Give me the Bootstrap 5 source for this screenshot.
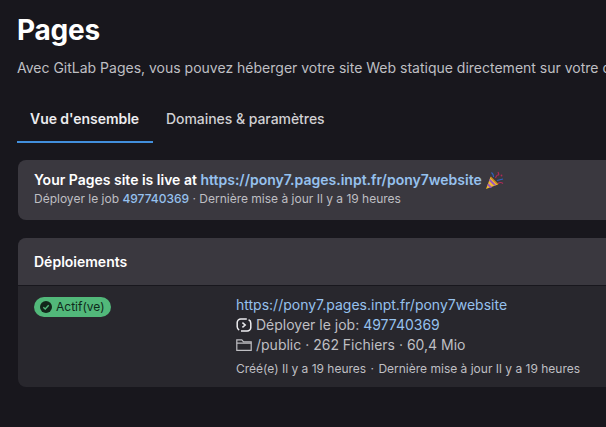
<!DOCTYPE html>
<html lang="fr">
<head>
    <meta charset="UTF-8">
    <meta name="viewport" content="width=device-width, initial-scale=1.0">
    <title>Pages</title>
    <link rel="stylesheet" href="https://cdn.jsdelivr.net/npm/bootstrap@5.3.0/dist/css/bootstrap.min.css">
    <style>
        html, body { height: 100%; overflow: hidden; }
        body { background: #18171d; color: #ececef; font-family: Inter, "Liberation Sans", sans-serif; font-size: 14px; }
        a { color: #96c1ee; text-decoration: none; }
        .page-wrap { width: 900px; padding: 12px 0 0 17px; }
        .page-title { font-size: 28px; line-height: 36px; font-weight: 700; color: #fff; margin: 0 0 10px; letter-spacing: -.25px; }
        .page-sub { font-size: 14px; line-height: 20px; color: #bfbfc3; margin: 0 0 19px; white-space: nowrap; }
        .tab-bar { gap: 0; margin-bottom: 17px; }
        .tab-item { padding: 0 13px; height: 46px; line-height: 44px; color: #d1d0d3; font-size: 14px; font-weight: 500; letter-spacing: -.05px; }
        .tab-item.is-on { color: #ececef; font-weight: 600; width: 136px; border-bottom: 2px solid #428fdc; }
        .live-box { background: #3a383f; border-radius: 8px; margin-left: 1px; height: 60px; padding: 10px 16px; margin-bottom: 18px; }
        .live-title { font-size: 14px; line-height: 20px; font-weight: 600; color: #fff; display: flex; align-items: center; gap: 3px; }
        .live-meta { font-size: 12px; line-height: 18px; color: #bfbfc3; margin-top: 0; }
        .live-meta a { font-weight: 500; }
        .deploy-card { background: #28272d; border: 0; border-radius: 8px; margin-left: 1px; height: 149px; overflow: hidden; }
        .deploy-head { background: #3a383f; height: 48px; line-height: 47px; padding: 0 16px; font-weight: 600; color: #fff; font-size: 14px; border-bottom: 1px solid #18171d; }
        .deploy-body { padding: 9px 16px; }
        .status-col { width: 202px; flex: none; padding-top: 2px; }
        .status-pill { background: #52b87a; color: #0f2a1a; border-radius: 10px; height: 20px; padding: 0 6px; font-size: 12px; line-height: 20px; gap: 4px; }
        .info-line { font-size: 14px; line-height: 20px; color: #bfbfc3; gap: 4px; }
        .info-small { font-size: 12px; line-height: 18px; color: #bfbfc3; margin-top: 5px; }
        .dot-sep { margin: 0 1px; }
    </style>
</head>
<body>
    <div class="page-wrap">
        <h1 class="page-title">Pages</h1>
        <p class="page-sub">Avec GitLab Pages, vous pouvez héberger votre site Web statique directement sur votre dépôt GitLab.</p>

        <div class="tab-bar d-flex">
            <div class="tab-item is-on">Vue d'ensemble</div>
            <div class="tab-item">Domaines &amp; paramètres</div>
        </div>

        <div class="live-box">
            <div class="live-title">
                <span>Your Pages site is live at <a href="#">https://pony7.pages.inpt.fr/pony7website</a></span>
                <!-- party popper -->
                <svg width="19" height="20" viewBox="0 0 19 20">
                    <path d="M1 19 L5.5 7 L13 14.5 Z" fill="#f0bb2e"/>
                    <path d="M3.2 13.2 L7.2 17.2 L5.2 17.9 L2.4 15.2 Z M4.9 8.8 L11 15 L9.2 15.8 L4.1 10.7 Z" fill="#9a55c4"/>
                    <path d="M5.5 7 L13 14.5" stroke="#c8861c" stroke-width="1.3"/>
                    <path d="M8.6 7 Q8.5 4 6.5 2.5" stroke="#2f63c4" stroke-width="1.1" fill="none"/>
                    <path d="M10.5 8 Q12 4.5 13 5 Q14.5 5.5 13 2" stroke="#b02a58" stroke-width="1.1" fill="none"/>
                    <path d="M12 10.5 L18 9" stroke="#2f63c4" stroke-width="1.1"/>
                    <path d="M13 13.5 Q15.5 11.5 18 13.5" stroke="#b02a58" stroke-width="1.1" fill="none"/>
                    <circle cx="16.5" cy="5.5" r=".9" fill="#b02a58"/>
                </svg>
            </div>
            <div class="live-meta">Déployer le job <a href="#">497740369</a> · Dernière mise à jour Il y a 19 heures</div>
        </div>

        <div class="card deploy-card">
            <div class="deploy-head">Déploiements</div>
            <div class="deploy-body d-flex">
                <div class="status-col">
                    <span class="status-pill d-inline-flex align-items-center">
                        <svg width="12" height="12" viewBox="0 0 12 12">
                            <circle cx="6" cy="6" r="6" fill="#12261a"/>
                            <path d="M3.3 6.2 L5.2 8 L8.7 4.3" stroke="#52b87a" stroke-width="1.4" fill="none"/>
                        </svg>
                        Actif(ve)
                    </span>
                </div>
                <div>
                    <div class="info-line"><a href="#">https://pony7.pages.inpt.fr/pony7website</a></div>
                    <div class="info-line d-flex align-items-center">
                        <svg width="16" height="16" viewBox="0 0 16 16" fill="none" stroke="#ececef" stroke-width="1.5">
                            <path d="M5 14 H11 A3.6 3.6 0 0 0 14.8 10.4 V6.2 A3.6 3.6 0 0 0 12.6 2.8"/>
                            <path d="M10.8 2 H4.8 A3.6 3.6 0 0 0 1.2 5.6 V9.8 A3.6 3.6 0 0 0 3.2 13"/>
                            <path d="M6.4 5.6 L9.2 8 L6.4 10.4"/>
                        </svg>
                        <span>Déployer le job: <a href="#">497740369</a></span>
                    </div>
                    <div class="info-line d-flex align-items-center">
                        <svg width="16" height="16" viewBox="0 0 16 16" fill="none" stroke="#bfbfc3" stroke-width="1.2">
                            <path d="M.8 13.4 V2.8 H5.8 L7.6 4.8 H15.2 V13.4 Z"/>
                            <path d="M.8 6.2 H15.2"/>
                        </svg>
                        <span>/public · 262 Fichiers · 60,4 Mio</span>
                    </div>
                    <div class="info-small">Créé(e) Il y a 19 heures <span class="dot-sep">·</span> Dernière mise à jour Il y a 19 heures</div>
                </div>
            </div>
        </div>
    </div>
    <script src="https://cdn.jsdelivr.net/npm/bootstrap@5.3.0/dist/js/bootstrap.bundle.min.js"></script>
</body>
</html>
